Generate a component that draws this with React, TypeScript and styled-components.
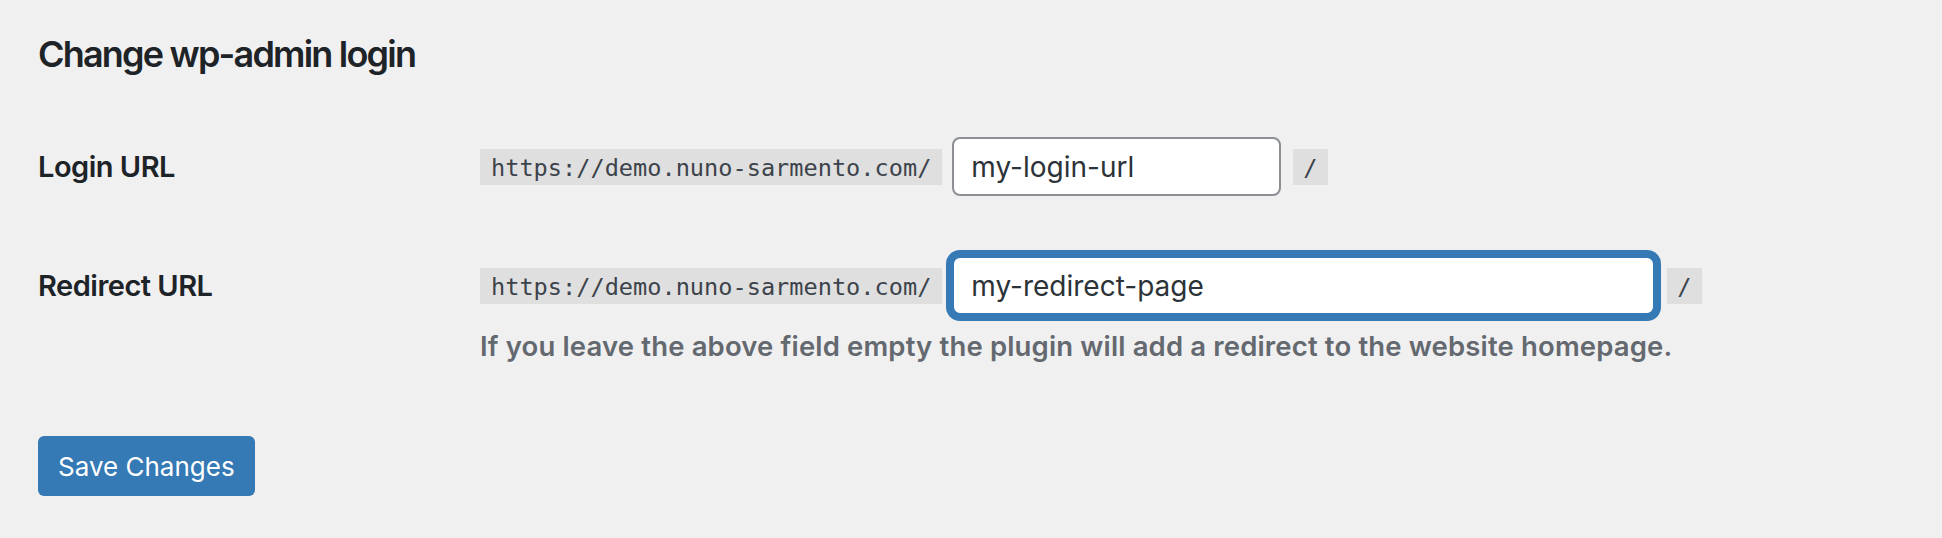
import React from 'react';
import styled, { createGlobalStyle, css } from 'styled-components';

const GlobalStyle = createGlobalStyle`
  html, body {
    margin: 0;
    padding: 0;
    background: #f0f0f1;
  }
  body {
    font-family: Inter, "Noto Sans", "Liberation Sans", sans-serif;
    color: #1d2327;
  }
`;

const accent = '#3579b5';

const Page = styled.div`
  min-height: 538px;
  padding: 32px 38px 0;
  box-sizing: border-box;
`;

const Title = styled.h2`
  margin: 0;
  font-size: 36px;
  line-height: 44px;
  font-weight: 600;
  letter-spacing: -1.8px;
  color: #1d2327;
`;

const FormTable = styled.div`
  display: grid;
  grid-template-columns: 442px 1fr;
  row-gap: 60px;
  margin-top: 61px;
`;

const FieldLabel = styled.label`
  align-self: start;
  padding-top: 12px;
  font-size: 29px;
  line-height: 36px;
  font-weight: 600;
  letter-spacing: -0.5px;
  color: #1d2327;
`;

const FieldCell = styled.div`
  display: flex;
  flex-direction: column;
  align-items: flex-start;
`;

const InputLine = styled.div`
  display: flex;
  align-items: center;
  gap: 10px;
`;

const Code = styled.code`
  display: block;
  font-family: "DejaVu Sans Mono", "Liberation Mono", monospace;
  font-size: 23.6px;
  line-height: 26px;
  padding: 6px 11px 4px;
  background: rgba(0, 0, 0, 0.07);
  color: #3c434a;
`;

const Suffix = styled(Code)`
  padding: 6px 10px 4px;
  margin-left: 2px;
`;

const TextInput = styled.input<{ $width: number; $focused?: boolean }>`
  box-sizing: border-box;
  width: ${p => p.$width}px;
  height: 59px;
  margin: 0;
  padding: 0 17px;
  font-family: Inter, "Noto Sans", sans-serif;
  font-size: 28px;
  color: #2c3338;
  background: #fff;
  border: 2px solid #8c8f94;
  border-radius: 8px;
  outline: none;
  ${p =>
    p.$focused &&
    css`
      border-color: ${accent};
      box-shadow: 0 0 0 6px ${accent};
    `}
`;

const Description = styled.p`
  margin: 13px 0 0;
  font-size: 27.5px;
  line-height: 36px;
  font-weight: 600;
  letter-spacing: 0.15px;
  color: #646970;
`;

const SaveButton = styled.button`
  display: block;
  margin-top: 72px;
  height: 60px;
  padding: 0 20px;
  font-family: Inter, "Noto Sans", sans-serif;
  font-size: 26px;
  color: #fff;
  background: ${accent};
  border: none;
  border-radius: 6px;
  cursor: pointer;
`;

const site = 'https://demo.nuno-sarmento.com/';

export default function App() {
  return (
    <>
      <GlobalStyle />
      <Page>
        <Title>Change wp-admin login</Title>
        <FormTable>
          <FieldLabel htmlFor="login-url">Login URL</FieldLabel>
          <FieldCell>
            <InputLine>
              <Code>{site}</Code>
              <TextInput id="login-url" $width={329} defaultValue="my-login-url" readOnly />
              <Suffix>/</Suffix>
            </InputLine>
          </FieldCell>

          <FieldLabel htmlFor="redirect-url">Redirect URL</FieldLabel>
          <FieldCell>
            <InputLine>
              <Code>{site}</Code>
              <TextInput id="redirect-url" $width={703} $focused defaultValue="my-redirect-page" readOnly />
              <Suffix>/</Suffix>
            </InputLine>
            <Description>
              If you leave the above field empty the plugin will add a redirect to the website homepage.
            </Description>
          </FieldCell>
        </FormTable>
        <SaveButton type="button">Save Changes</SaveButton>
      </Page>
    </>
  );
}
